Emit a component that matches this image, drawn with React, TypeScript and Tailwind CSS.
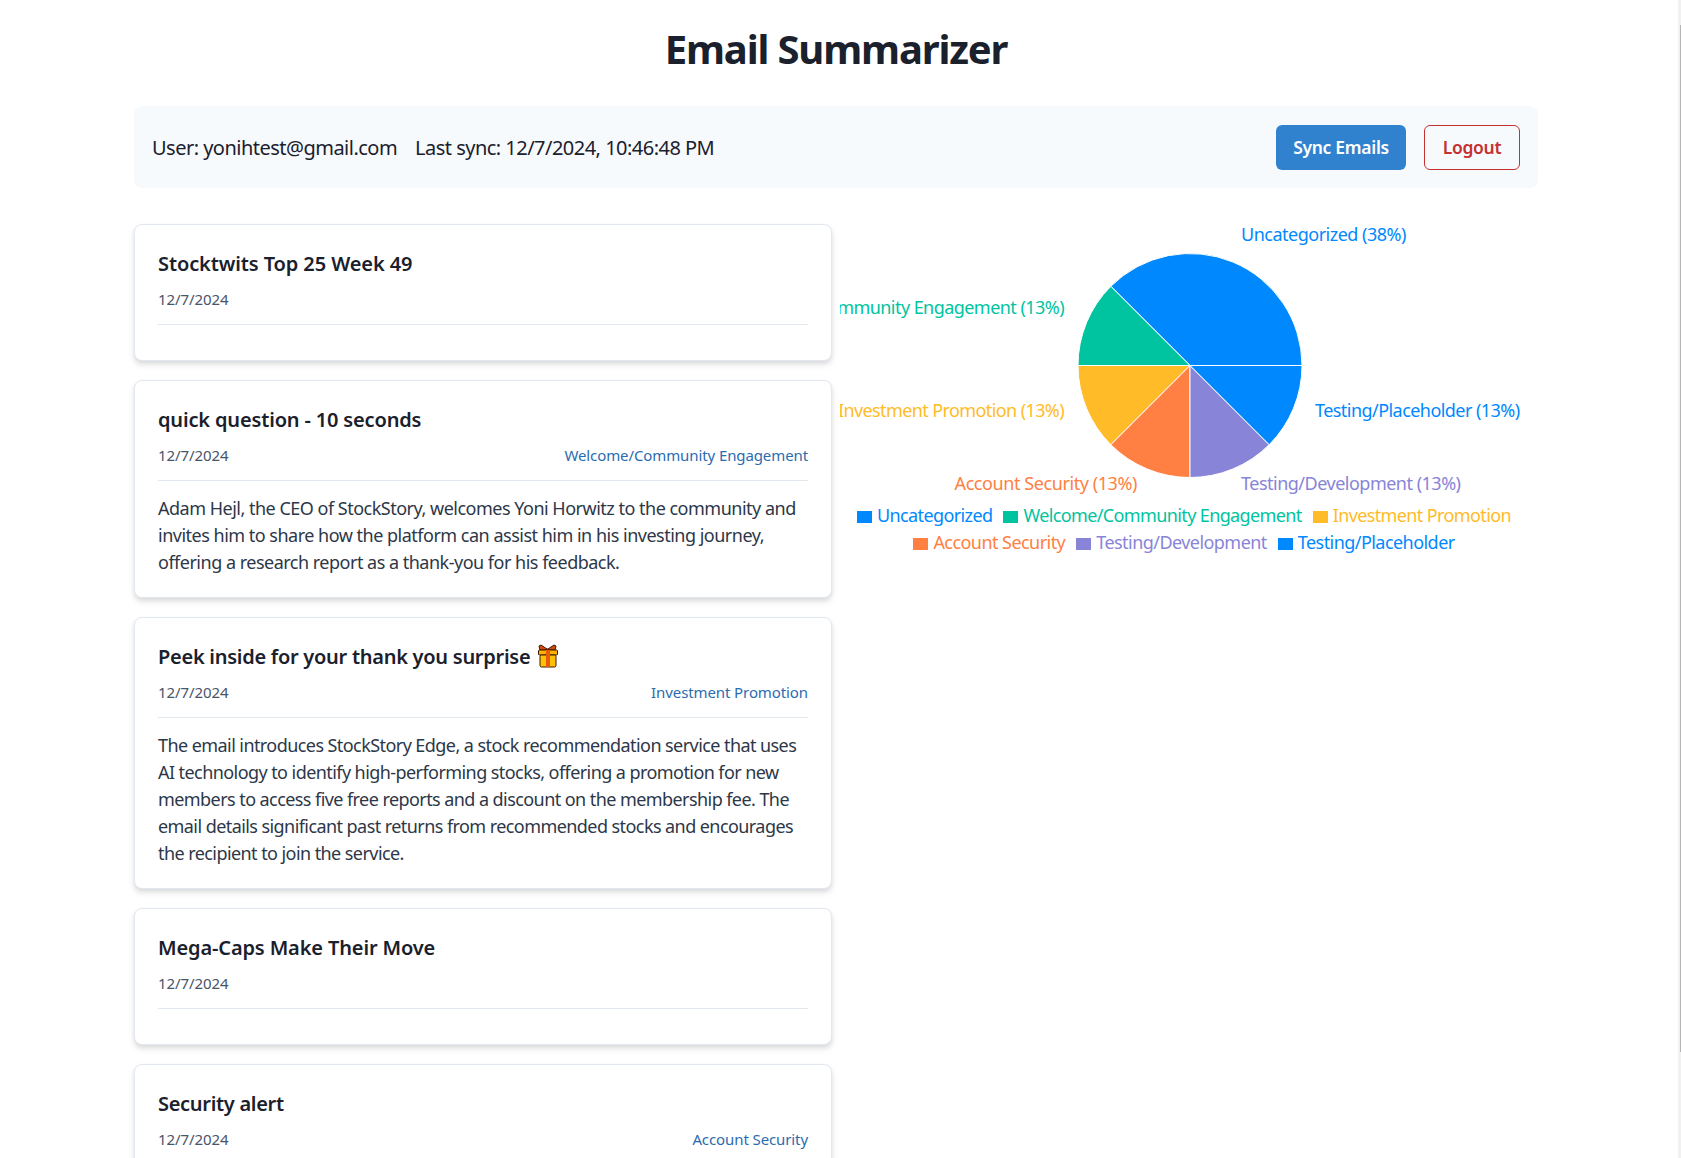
const palette = {
  blue: "#0088fe",
  green: "#00c49f",
  yellow: "#ffbb28",
  orange: "#ff8042",
  purple: "#8884d8",
}

const emails = [
  { title: "Stocktwits Top 25 Week 49", titleClass: "tracking-[-0.1px]", date: "12/7/2024", category: "", summary: [] as string[], summaryClass: "" },
  {
    title: "quick question - 10 seconds",
    titleClass: "tracking-[-0.16px]",
    date: "12/7/2024",
    category: "Welcome/Community Engagement",
    summary: [
      "Adam Hejl, the CEO of StockStory, welcomes Yoni Horwitz to the community and",
      "invites him to share how the platform can assist him in his investing journey,",
      "offering a research report as a thank-you for his feedback.",
    ],
    summaryClass: "tracking-[-0.5px]",
  },
  {
    title: "Peek inside for your thank you surprise",
    titleClass: "tracking-[-0.27px]",
    gift: true,
    date: "12/7/2024",
    category: "Investment Promotion",
    summary: [
      "The email introduces StockStory Edge, a stock recommendation service that uses",
      "AI technology to identify high-performing stocks, offering a promotion for new",
      "members to access five free reports and a discount on the membership fee. The",
      "email details significant past returns from recommended stocks and encourages",
      "the recipient to join the service.",
    ],
    summaryClass: "tracking-[-0.57px]",
  },
  { title: "Mega-Caps Make Their Move", titleClass: "tracking-[-0.13px]", date: "12/7/2024", category: "", summary: [] as string[], summaryClass: "" },
  { title: "Security alert", titleClass: "tracking-[-0.3px]", date: "12/7/2024", category: "Account Security", summary: [] as string[], summaryClass: "" },
]

const legend = [
  {
    className: "flex gap-[11px] tracking-[-0.62px]",
    items: [
      { name: "Uncategorized", color: palette.blue },
      { name: "Welcome/Community Engagement", color: palette.green },
      { name: "Investment Promotion", color: palette.yellow },
    ],
  },
  {
    className: "flex gap-[11px] tracking-[-0.55px]",
    items: [
      { name: "Account Security", color: palette.orange },
      { name: "Testing/Development", color: palette.purple },
      { name: "Testing/Placeholder", color: palette.blue },
    ],
  },
]

const cx = 350
const cy = 141.5
const r = 112

function point(deg: number) {
  const a = (deg * Math.PI) / 180
  return [cx + r * Math.cos(a), cy - r * Math.sin(a)]
}

function slice(from: number, to: number) {
  const [x1, y1] = point(from)
  const [x2, y2] = point(to)
  const large = to - from > 180 ? 1 : 0
  return `M${cx} ${cy} L${x1} ${y1} A${r} ${r} 0 ${large} 0 ${x2} ${y2} Z`
}

const slices = [
  { from: 0, to: 135, color: palette.blue },
  { from: 135, to: 180, color: palette.green },
  { from: 180, to: 225, color: palette.yellow },
  { from: 225, to: 270, color: palette.orange },
  { from: 270, to: 315, color: palette.purple },
  { from: 315, to: 360, color: palette.blue },
]

const labels = [
  { text: "Uncategorized (38%)", x: 401, y: 17, anchor: "start", color: palette.blue, spacing: -0.5 },
  { text: "Welcome/Community Engagement (13%)", x: 224, y: 90, anchor: "end", color: palette.green, spacing: -0.55 },
  { text: "Investment Promotion (13%)", x: 224, y: 193, anchor: "end", color: palette.yellow, spacing: -0.6 },
  { text: "Account Security (13%)", x: 297, y: 266, anchor: "end", color: palette.orange, spacing: -0.42 },
  { text: "Testing/Development (13%)", x: 401, y: 266, anchor: "start", color: palette.purple, spacing: -0.5 },
  { text: "Testing/Placeholder (13%)", x: 475, y: 193, anchor: "start", color: palette.blue, spacing: -0.55 },
]

function GiftIcon() {
  return (
    <svg width="22" height="24" viewBox="0 0 22 24" className="inline-block align-[-4px] ml-[7px]">
      <path d="M4 1 L10 5 L11 5 L17 1 L19 2 L18 6 L3 6 L2 2 Z" fill="#d9480f" stroke="#3a1a00" strokeWidth="1" />
      <rect x="1.5" y="6" width="19" height="5" rx="1" fill="#ffb000" stroke="#3a1a00" strokeWidth="1" />
      <rect x="3" y="11" width="16" height="12" rx="1.5" fill="#ffc107" stroke="#3a1a00" strokeWidth="1" />
      <rect x="9" y="6" width="4" height="17" fill="#e8590c" />
    </svg>
  )
}

function EmailCard({ email }: { email: (typeof emails)[number] }) {
  return (
    <div className="bg-white border border-[#e2e8f0] rounded-lg shadow-[0_4px_6px_rgba(0,0,0,0.1),0_2px_4px_rgba(0,0,0,0.06)] px-[23px] pt-[24px] pb-[21px] shrink-0">
      <h3 className={`text-[20px] leading-[30px] font-semibold text-[#1a202c] ${email.titleClass}`}>
        {email.title}
        {email.gift && <GiftIcon />}
      </h3>
      <div className="flex justify-between items-center mt-[8px] pb-[12px] mb-[14px] border-b border-[#e2e8f0] h-[38px]">
        <span className="text-[15px] text-[#4a5568] tracking-[-0.08px]">{email.date}</span>
        <span className="text-[15px] text-[#2b6cb0] tracking-[-0.1px]">{email.category}</span>
      </div>
      <div className={`text-[18px] leading-[27px] text-[#2d3748] ${email.summaryClass}`}>
        {email.summary.map((line) => (
          <div key={line} className="whitespace-nowrap">
            {line}
          </div>
        ))}
      </div>
    </div>
  )
}

function Chart() {
  return (
    <div className="w-[688px] shrink-0">
      <svg width="688" height="278" className="block overflow-hidden">
        {slices.map((s) => (
          <path key={s.from} d={slice(s.from, s.to)} fill={s.color} stroke="#fff" strokeWidth="1" />
        ))}
        {labels.map((l) => (
          <text key={l.text} x={l.x} y={l.y} textAnchor={l.anchor as "start" | "end"} fill={l.color} fontSize="18" letterSpacing={l.spacing}>
            {l.text}
          </text>
        ))}
      </svg>
      <div className="flex flex-col items-center text-[18px] leading-[27px]">
        {legend.map((row) => (
          <div key={row.items[0].name} className={row.className}>
            {row.items.map((item) => (
              <div key={item.name} className="flex items-center">
                <span className="w-[15px] h-[12px] mr-[5px] mt-[2px]" style={{ backgroundColor: item.color }} />
                <span style={{ color: item.color }}>{item.name}</span>
              </div>
            ))}
          </div>
        ))}
      </div>
    </div>
  )
}

export default function App() {
  return (
    <div className="h-[1158px] overflow-hidden bg-white relative font-['Noto_Sans',sans-serif]">
      <div className="w-[1404px] ml-[134px]">
        <h1 className="text-center text-[40px] leading-[60px] font-bold text-[#1a202c] tracking-[-1.15px] pt-[19px] h-[106px]">
          Email Summarizer
        </h1>
        <div className="flex items-center justify-between bg-[#f7fafc] rounded-lg h-[82px] px-[18px]">
          <div className="flex gap-[18px] text-[20px] text-[#1a202c] tracking-[-0.52px] pt-[2px]">
            <span>User: yonihtest@gmail.com</span>
            <span>Last sync: 12/7/2024, 10:46:48 PM</span>
          </div>
          <div className="flex gap-[18px]">
            <button className="h-[45px] w-[130px] bg-[#3182ce] text-white rounded-md text-[17.5px] font-semibold tracking-[-0.3px]">
              Sync Emails
            </button>
            <button className="h-[45px] w-[96px] bg-transparent border border-[#c53030] text-[#c53030] rounded-md text-[17.5px] font-semibold tracking-[-0.3px]">
              Logout
            </button>
          </div>
        </div>
        <div className="flex gap-[8px] mt-[36px]">
          <div className="w-[698px] shrink-0 flex flex-col gap-[19px]">
            {emails.map((email) => (
              <EmailCard key={email.title} email={email} />
            ))}
          </div>
          <Chart />
        </div>
      </div>
      {/* scrollbar strip */}
      <div className="absolute top-0 right-0 bottom-0 w-[3px] bg-[#f1f1f1]">
        <div className="absolute top-[25px] right-0 w-[1px] h-[1027px] bg-[#b5b5b5]" />
      </div>
    </div>
  )
}
